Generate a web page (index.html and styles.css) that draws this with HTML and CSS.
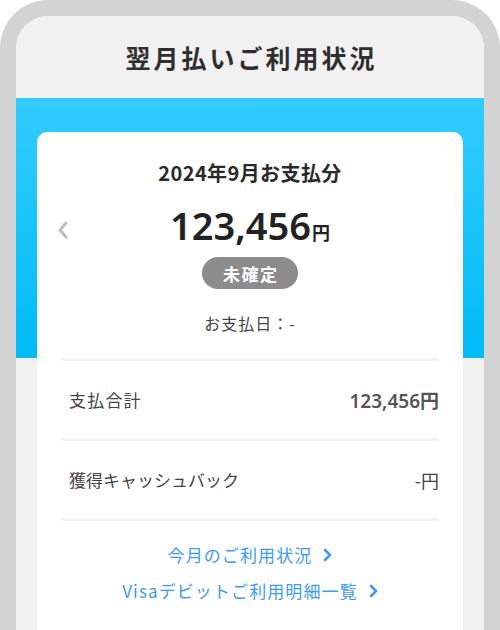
FILE: index.html
```html
<!DOCTYPE html>
<html lang="ja">
<head>
<meta charset="utf-8">
<title>翌月払いご利用状況</title>
<link rel="stylesheet" href="styles.css">
</head>
<body>
<div class="phone">
  <header class="header">
    <h1 class="title">翌月払いご利用状況</h1>
  </header>
  <main class="main">
    <section class="card">
      <h2 class="period">2024年9月お支払分</h2>
      <div class="amount-row">
        <svg class="prev" width="12" height="18" viewBox="0 0 12 18" aria-hidden="true">
          <path d="M9 2 L3 9 L9 16" fill="none" stroke="#bdbdbd" stroke-width="3" stroke-linecap="round" stroke-linejoin="round"/>
        </svg>
        <p class="amount"><span class="amount-num">123,456</span><span class="amount-yen">円</span></p>
      </div>
      <div class="badge-wrap"><span class="badge">未確定</span></div>
      <p class="payday">お支払日：-</p>
      <div class="divider"></div>
      <div class="row">
        <span class="row-label wide">支払合計</span>
        <span class="row-value strong">123,456円</span>
      </div>
      <div class="divider"></div>
      <div class="row">
        <span class="row-label">獲得キャッシュバック</span>
        <span class="row-value">-円</span>
      </div>
      <div class="divider"></div>
      <nav class="links">
        <a class="link" href="#">今月のご利用状況<svg class="chev" width="9" height="14" viewBox="0 0 9 14" aria-hidden="true"><path d="M2 2 L7 7 L2 12" fill="none" stroke="#3d9bf0" stroke-width="2.6" stroke-linecap="round" stroke-linejoin="round"/></svg></a>
        <a class="link" href="#">Visaデビットご利用明細一覧<svg class="chev" width="9" height="14" viewBox="0 0 9 14" aria-hidden="true"><path d="M2 2 L7 7 L2 12" fill="none" stroke="#3d9bf0" stroke-width="2.6" stroke-linecap="round" stroke-linejoin="round"/></svg></a>
      </nav>
    </section>
  </main>
</div>
</body>
</html>
```
FILE: styles.css
```css
* { box-sizing: border-box; }
html, body {
  margin: 0;
  padding: 0;
  background: #ffffff;
}
body {
  font-family: "Noto Sans CJK JP", "Noto Sans", sans-serif;
  color: #333333;
}
.phone {
  width: 500px;
  height: 630px;
  overflow: hidden;
  border: 16px solid #d3d3d3;
  border-bottom: 0;
  border-radius: 48px 48px 0 0;
  background: #f1f1f1;
  display: flex;
  flex-direction: column;
}
.header {
  flex: 0 0 82px;
  height: 82px;
  display: flex;
  align-items: center;
  justify-content: center;
  background: #f1f1f1;
}
.title {
  margin: 0;
  font-size: 25px;
  font-weight: 700;
  letter-spacing: 3px;
  padding-left: 3px;
  color: #2f2f2f;
  line-height: 30px;
}
.main {
  flex: 1 0 auto;
  background-color: #f1f1f1;
  background-image: linear-gradient(#33ccff, #00bbf7);
  background-size: 100% 260px;
  background-repeat: no-repeat;
  padding: 34px 21px 0;
}
.card {
  background: #ffffff;
  border-radius: 10px 10px 0 0;
  padding: 29px 24px 40px;
  min-height: 520px;
}
.period {
  margin: 0;
  text-align: center;
  font-size: 20px;
  line-height: 24px;
  font-weight: 700;
  letter-spacing: 0.4px;
  color: #2a2a2a;
}
.amount-row {
  position: relative;
  margin-top: 19px;
  height: 50px;
  display: flex;
  align-items: center;
  justify-content: center;
}
.prev {
  position: absolute;
  left: -4px;
  top: 17px;
}
.amount {
  margin: 0;
  line-height: 50px;
  color: #222222;
}
.amount-num {
  font-family: "Noto Sans", sans-serif;
  font-size: 38px;
  font-weight: 600;
}
.amount-yen {
  font-size: 18px;
  font-weight: 600;
  margin-left: 1px;
}
.badge-wrap {
  margin-top: 3px;
  display: flex;
  justify-content: center;
}
.badge {
  display: inline-flex;
  align-items: center;
  justify-content: center;
  width: 96px;
  height: 32px;
  border-radius: 16px;
  background: #8c8c8c;
  color: #ffffff;
  font-size: 17px;
  font-weight: 700;
  letter-spacing: 1.5px;
  padding-left: 1.5px;
}
.payday {
  margin: 22px 0 0;
  text-align: center;
  font-size: 16px;
  line-height: 24px;
  letter-spacing: 1px;
  color: #444444;
}
.divider {
  height: 3px;
  background: #f4f4f4;
}
.payday + .divider {
  margin-top: 23px;
}
.row {
  height: 77px;
  display: flex;
  align-items: center;
  justify-content: space-between;
  padding: 0 0 0 8px;
}
.row-label {
  font-size: 17px;
  color: #444444;
}
.row-label.wide {
  letter-spacing: 1.2px;
}
.row-value {
  font-size: 18px;
  color: #444444;
}
.row-value.strong {
  font-family: "Noto Sans", "Noto Sans CJK JP", sans-serif;
  font-size: 19px;
  font-weight: 600;
  color: #555555;
}
.links {
  margin-top: 22px;
  display: flex;
  flex-direction: column;
  align-items: center;
  gap: 12px;
}
.link {
  display: inline-flex;
  align-items: center;
  gap: 11px;
  font-size: 17px;
  line-height: 24px;
  letter-spacing: 1.1px;
  color: #3d9bf0;
  text-decoration: none;
}
.chev {
  display: block;
}
```
